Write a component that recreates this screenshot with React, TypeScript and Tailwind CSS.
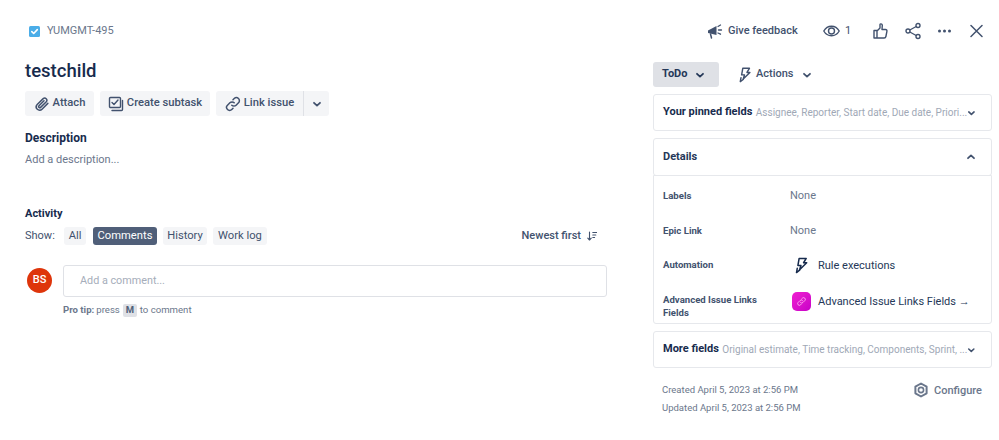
import React from "react";

const Chev = ({ up = false, className = "" }: { up?: boolean; className?: string }) => (
  <svg width="10" height="8" viewBox="0 0 10 8" className={className} fill="none" stroke="currentColor" strokeWidth="1.8" strokeLinecap="round" strokeLinejoin="round">
    {up ? <path d="M2 5.2 5 2.4 8 5.2" /> : <path d="M2 2.8 5 5.6 8 2.8" />}
  </svg>
);

const Bolt = ({ size = 18, className = "" }: { size?: number; className?: string }) => (
  <svg width={size} height={size} viewBox="0 0 18 18" className={className} fill="none" stroke="currentColor" strokeWidth="1.6" strokeLinejoin="round" strokeLinecap="round">
    <path d="M6.5 1.5h7.5l-2.8 4.6h3.3L7 13.5l1.4-4.6H5.2z" />
    <path d="M4.5 12 3.7 16.5 7 14" />
  </svg>
);

const ToolButton = ({ icon, label, w }: { icon: React.ReactNode; label: string; w: string }) => (
  <div className={`h-[25px] ${w} rounded-[3px] bg-[#f4f5f7] flex items-center justify-center gap-[3px] text-[11.2px] font-medium text-[#42526e] whitespace-nowrap`}>
    {icon}
    <span>{label}</span>
  </div>
);

const Chip = ({ label, w, active = false }: { label: string; w: string; active?: boolean }) => (
  <div className={`h-[18px] ${w} rounded-[3px] flex items-center justify-center text-[11.2px] whitespace-nowrap ${active ? "bg-[#505f79] text-white" : "bg-[#f4f5f7] text-[#42526e]"}`}>{label}</div>
);

const Panel = ({ title, hint }: { title: string; hint: string }) => (
  <div className="h-[37px] rounded-[3px] border border-[#e6e8ec] flex items-center pl-[9px] pr-[15px]">
    <span className="text-[11px] font-bold text-[#172b4d] whitespace-nowrap">{title}</span>
    <span className="ml-[3.5px] text-[10px] text-[#a0a8b6] whitespace-nowrap">{hint}</span>
    <Chev className="ml-auto text-[#42526e]" />
  </div>
);

const Row = ({ label, h, children }: { label: React.ReactNode; h: string; children: React.ReactNode }) => (
  <div className={`flex items-start ${h}`}>
    <div className="w-[136px] pl-[9px] text-[9.6px] font-bold leading-[13px] text-[#42526e]">{label}</div>
    <div className="flex items-center text-[11px] leading-[14px]">{children}</div>
  </div>
);

export default function App() {
  return (
    <div className="w-[999px] h-[440px] bg-white flex overflow-hidden text-[#42526e]" style={{ fontFamily: "Roboto, sans-serif" }}>
      {/* Left column */}
      <div className="w-[653px] pl-[25px] pt-[24px] shrink-0">
        <div className="h-[14px] flex items-center pl-[4px] gap-[7px] text-[11px] text-[#6b778c]">
          <svg width="11" height="11" viewBox="0 0 11 11">
            <rect width="11" height="11" rx="1.5" fill="#4bade8" />
            <path d="M2.8 5.6 4.7 7.5 8.3 3.6" fill="none" stroke="#fff" strokeWidth="1.6" strokeLinecap="round" strokeLinejoin="round" />
          </svg>
          <span>YUMGMT-495</span>
        </div>
        <h1 className="mt-[19px] text-[18.5px] leading-[28px] font-medium text-[#172b4d]">testchild</h1>
        <div className="mt-[6px] flex h-[25px]">
          <ToolButton
            w="w-[69px]"
            label="Attach"
            icon={
              <svg width="16" height="16" viewBox="0 0 16 16" fill="none" stroke="currentColor" strokeWidth="1.5" strokeLinecap="round">
                <path d="M13.8 7.4 8 13.2a3.3 3.3 0 0 1-4.8-4.6L9.2 2.6a2.2 2.2 0 0 1 3.1 3.1L6.6 11.4a1.1 1.1 0 0 1-1.6-1.6l5-5" />
              </svg>
            }
          />
          <div className="w-[6px]" />
          <ToolButton
            w="w-[110px]"
            label="Create subtask"
            icon={
              <svg width="16" height="16" viewBox="0 0 16 16" fill="none" stroke="currentColor" strokeWidth="1.4" strokeLinejoin="round" strokeLinecap="round">
                <rect x="1.5" y="1.5" width="11" height="10" rx="1" />
                <path d="M4 6.5 6 8.5 10 4" />
                <path d="M14.5 4.5v9a1 1 0 0 1-1 1H4" />
              </svg>
            }
          />
          <div className="w-[6px]" />
          <ToolButton
            w="w-[87px] rounded-r-none"
            label="Link issue"
            icon={
              <svg width="16" height="16" viewBox="0 0 16 16" fill="none" stroke="currentColor" strokeWidth="1.5" strokeLinecap="round">
                <path d="M6.8 9.2a3 3 0 0 0 4.3 0l2.4-2.4a3 3 0 0 0-4.3-4.3L8 3.7" />
                <path d="M9.2 6.8a3 3 0 0 0-4.3 0L2.5 9.2a3 3 0 0 0 4.3 4.3L8 12.3" />
              </svg>
            }
          />
          <div className="w-[26px] h-[25px] bg-[#f4f5f7] rounded-r-[3px] flex items-center justify-center border-l border-[#dfe1e6]">
            <Chev />
          </div>
        </div>
        <div className="mt-[15px] text-[12px] leading-[14px] font-bold text-[#172b4d]">Description</div>
        <div className="mt-[8px] text-[11px] leading-[14px] text-[#6b778c]">Add a description...</div>
        <div className="mt-[40px] text-[11px] leading-[14px] font-bold text-[#172b4d]">Activity</div>
        <div className="mt-[6px] flex items-center h-[18px] w-[572px]">
          <span className="text-[11px] w-[39px]">Show:</span>
          <Chip label="All" w="w-[22px]" />
          <div className="w-[7px]" />
          <Chip label="Comments" w="w-[64px]" active />
          <div className="w-[6px]" />
          <Chip label="History" w="w-[44px]" />
          <div className="w-[6px]" />
          <Chip label="Work log" w="w-[54px]" />
          <div className="ml-auto flex items-center gap-[6px] text-[11px] font-medium">
            <span>Newest first</span>
            <svg width="10" height="10" viewBox="0 0 10 10" fill="none" stroke="currentColor" strokeWidth="1.1" strokeLinecap="round" strokeLinejoin="round">
              <path d="M2.5 1v8M.8 7.2 2.5 9l1.7-1.8M5.8 1.5h4M5.8 4h3M5.8 6.5h1.8" />
            </svg>
          </div>
        </div>
        <div className="mt-[20px] flex items-start w-[582px]">
          <div className="w-[25px] h-[25px] mt-[3px] ml-[2px] shrink-0 rounded-full bg-[#de350b] text-white flex items-center justify-center text-[11px] font-medium">BS</div>
          <div className="ml-[11px] flex-1">
            <div className="h-[32px] rounded-[3px] border border-[#dfe1e6] flex items-center pl-[16px] text-[10.8px] text-[#a5adba]">Add a comment...</div>
            <div className="mt-[6px] flex items-center text-[9.6px] leading-[14px] text-[#6b778c]">
              <span className="font-bold">Pro tip:</span>
              <span className="ml-[2px]">press</span>
              <span className="mx-[3px] w-[14px] h-[13px] rounded-[2px] bg-[#dfe1e6] flex items-center justify-center font-bold text-[#505f79] text-[9.5px]">M</span>
              <span>to comment</span>
            </div>
          </div>
        </div>
      </div>

      {/* Right column */}
      <div className="w-[339px] shrink-0 relative">
        <div className="h-[62px] flex items-start pt-[22px] text-[11px] font-medium whitespace-nowrap">
          <svg className="ml-[54px] mt-[1px] shrink-0" width="16" height="16" viewBox="0 0 16 16" fill="none">
            <path d="M1 7.5 9.5 3v9L1 10z" fill="#42526e" />
            <path d="M3.5 11 4.5 15" stroke="#42526e" strokeWidth="1.5" strokeLinecap="round" />
            <path d="M11 3.5 13.5 2M11.5 7h3M11 10l2.5 1.2" stroke="#42526e" strokeWidth="1.3" strokeLinecap="round" />
          </svg>
          <span className="ml-[5px] mt-[2px] leading-[14px] w-[70px]">Give feedback</span>
          <svg className="ml-[25px] shrink-0" width="17" height="18" viewBox="0 0 17 18" fill="none" stroke="#42526e" strokeWidth="1.4">
            <path d="M.8 9C2.6 5.8 5.4 4.2 8.5 4.2S14.4 5.8 16.2 9c-1.8 3.2-4.7 4.8-7.7 4.8S2.6 12.2.8 9Z" />
            <circle cx="8.5" cy="9" r="3" />
          </svg>
          <span className="ml-[5px] mt-[2px] leading-[14px] font-normal w-[6px]">1</span>
          <svg className="ml-[22px] shrink-0" width="15" height="18" viewBox="0 0 15 18" fill="none" stroke="#42526e" strokeWidth="1.4" strokeLinejoin="round">
            <path d="M1 8.5h3v7.5H1zM4 9l3-3V2.8c0-1.3 2-1.3 2.3.4L9 7.5h3.5c1 0 1.6.8 1.4 1.8l-1 5.2c-.2 1-.8 1.5-1.7 1.5H4" />
          </svg>
          <svg className="ml-[17px] shrink-0" width="16" height="18" viewBox="0 0 16 18" fill="none" stroke="#42526e" strokeWidth="1.4">
            <circle cx="3" cy="9" r="2" />
            <circle cx="13" cy="3.5" r="2" />
            <circle cx="13" cy="14.5" r="2" />
            <path d="M4.8 8 11.2 4.5M4.8 10l6.4 3.5" />
          </svg>
          <svg className="ml-[16px] shrink-0" width="15" height="18" viewBox="0 0 15 18" fill="#42526e">
            <circle cx="2.5" cy="9" r="1.5" />
            <circle cx="7.5" cy="9" r="1.5" />
            <circle cx="12.5" cy="9" r="1.5" />
          </svg>
          <svg className="ml-[18px] shrink-0" width="13" height="18" viewBox="0 0 13 18" fill="none" stroke="#42526e" strokeWidth="1.5" strokeLinecap="round">
            <path d="M1 3.5 12 14.5M12 3.5 1 14.5" />
          </svg>
        </div>
        <div className="flex items-center h-[25px]">
          <div className="w-[66px] h-[25px] rounded-[3px] bg-[#dfe1e6] flex items-center pl-[9px] gap-[8px] text-[11px] font-bold text-[#253858]">
            <span>ToDo</span>
            <Chev />
          </div>
          <Bolt size={16} className="ml-[18px]" />
          <span className="ml-[3px] text-[11px] font-medium">Actions</span>
          <Chev className="ml-[8px]" />
        </div>
        <div className="mt-[7px]">
          <Panel title="Your pinned fields" hint="Assignee, Reporter, Start date, Due date, Priori..." />
        </div>
        <div className="mt-[7px] h-[38px] rounded-[3px] border border-[#e6e8ec] flex items-center pl-[9px] pr-[15px]">
          <span className="text-[11px] font-bold text-[#253858]">Details</span>
          <Chev up className="ml-auto" />
        </div>
        <div className="h-[149px] -mt-[1px] rounded-b-[3px] border border-[#e6e8ec] pt-[13px]">
          <Row label="Labels" h="h-[34.5px]"><span className="text-[#6b778c]">None</span></Row>
          <Row label="Epic Link" h="h-[34.5px]"><span className="text-[#6b778c]">None</span></Row>
          <Row label="Automation" h="h-[35px]">
            <Bolt size={17} className="ml-[3px] -mt-[1px] text-[#172b4d]" />
            <span className="ml-[8px] text-[#253858]">Rule executions</span>
          </Row>
          <Row label={<>Advanced Issue Links<br />Fields</>} h="h-[30px]">
            <div className="w-[19px] h-[19px] ml-[2px] -mt-[1px] rounded-[5px] bg-gradient-to-br from-[#f01dd0] to-[#c800c8] flex items-center justify-center">
              <svg width="11" height="11" viewBox="0 0 11 11" fill="none" stroke="#ffb0f2" strokeWidth=".9" strokeLinecap="round">
                <path d="M4.5 6.5a1.7 1.7 0 0 0 2.4 0l2-2a1.7 1.7 0 0 0-2.4-2.4L5.6 3" />
                <path d="M6.5 4.5a1.7 1.7 0 0 0-2.4 0l-2 2a1.7 1.7 0 0 0 2.4 2.4l.9-.9" />
              </svg>
            </div>
            <span className="ml-[7px] text-[#253858] whitespace-nowrap">Advanced Issue Links Fields →</span>
          </Row>
        </div>
        <div className="mt-[7px]">
          <Panel title="More fields" hint="Original estimate, Time tracking, Components, Sprint, ..." />
        </div>
        <div className="mt-[13px] flex">
          <div className="pl-[9px] text-[9.5px] leading-[18px] text-[#6b778c]">
            <div>Created April 5, 2023 at 2:56 PM</div>
            <div>Updated April 5, 2023 at 2:56 PM</div>
          </div>
          <div className="ml-auto mr-[10px] mt-[1px] flex items-start gap-[5px] text-[11px] font-medium text-[#6b778c]">
            <svg width="16" height="16" viewBox="0 0 16 16" fill="none" stroke="#6b778c" strokeWidth="2">
              <path d="M8 1.5 13.6 4.7V11.3L8 14.5 2.4 11.3V4.7Z" strokeLinejoin="round" />
              <circle cx="8" cy="8" r="2.6" strokeWidth="1.6" />
            </svg>
            <span className="leading-[16px] mt-[1px]">Configure</span>
          </div>
        </div>
      </div>
    </div>
  );
}
